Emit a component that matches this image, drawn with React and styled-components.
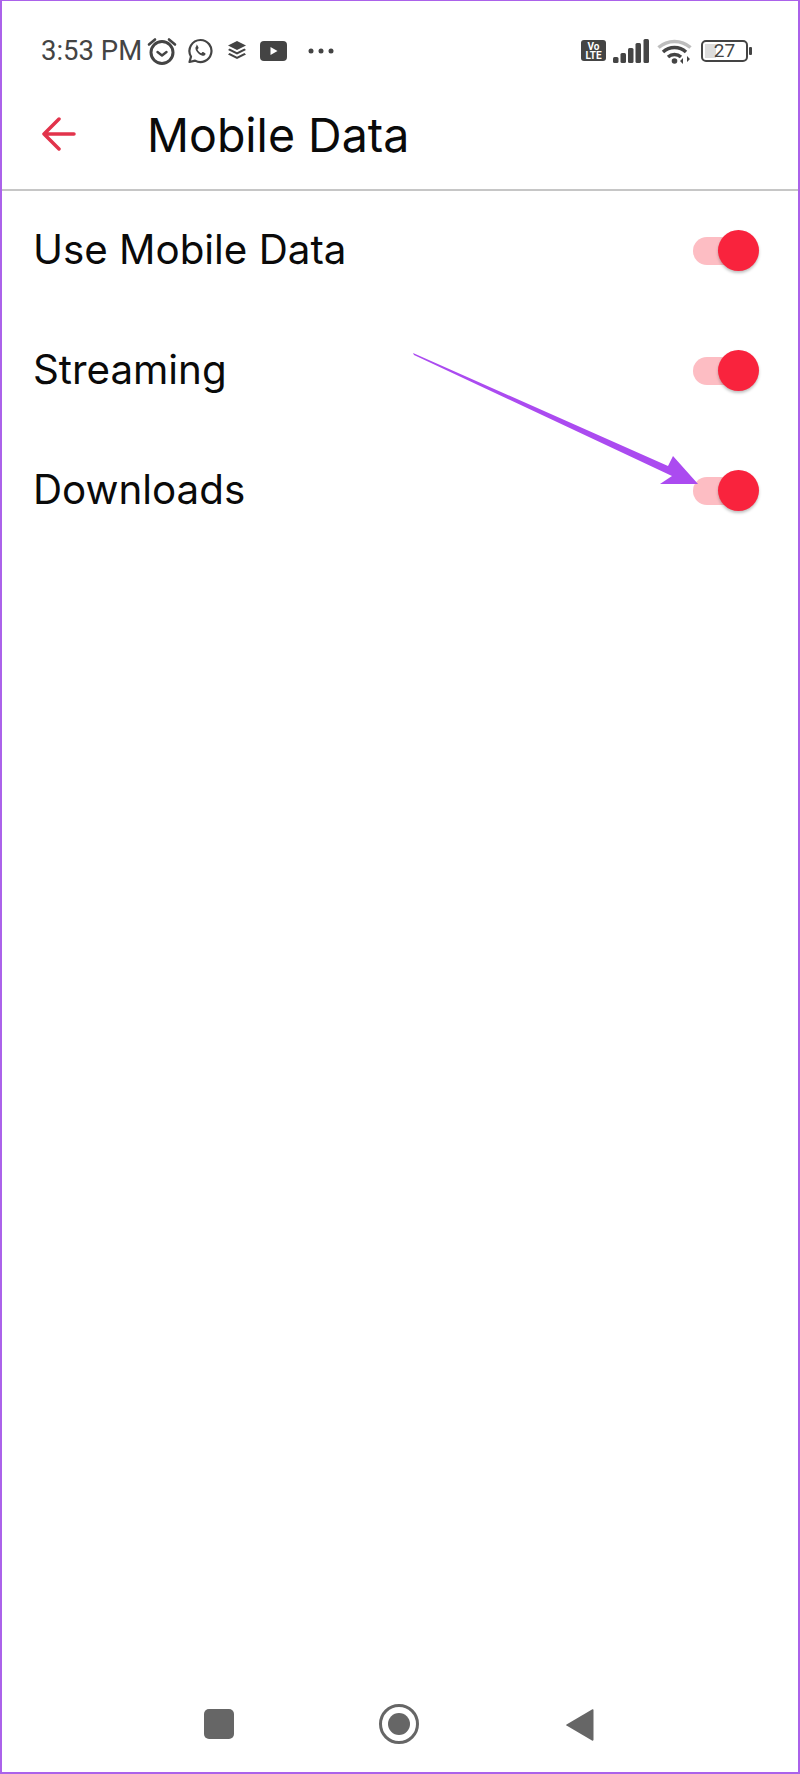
import styled, { createGlobalStyle } from 'styled-components';

const GlobalStyle = createGlobalStyle`
  html, body {
    margin: 0;
    padding: 0;
    background: #fff;
  }
  * {
    box-sizing: border-box;
  }
`;

const Page = styled.div`
  position: relative;
  width: 800px;
  height: 1774px;
  display: flex;
  flex-direction: column;
  background: #fff;
  border: 2px solid #ab62ea;
  border-top-width: 1px;
  font-family: 'Inter', 'Roboto', sans-serif;
  color: #0a0a0a;
  overflow: hidden;
`;

const StatusBar = styled.div`
  height: 99px;
  flex-shrink: 0;
  display: flex;
  align-items: center;
  padding: 0 50px 0 39px;
`;

const Time = styled.span`
  font-family: 'Roboto', sans-serif;
  font-size: 27.5px;
  color: #444;
  margin-right: 5px;
  white-space: nowrap;
`;

const StatusIcons = styled.div`
  display: flex;
  align-items: center;
  gap: ${({ $gap }) => $gap || 11}px;
`;

const RightIcons = styled(StatusIcons)`
  margin-left: auto;
`;

const IconSlot = styled.div`
  display: flex;
  margin-left: ${({ $left }) => $left || 0}px;
`;

const VoBadge = styled.div`
  width: 25px;
  height: 21px;
  margin-right: -1px;
  background: #444;
  border-radius: 3px;
  color: #fff;
  font-family: 'Roboto', sans-serif;
  font-size: 10px;
  line-height: 9px;
  font-weight: 700;
  text-align: center;
  padding-top: 2px;
`;

const Battery = styled.div`
  position: relative;
  width: 47px;
  height: 22px;
  border: 2px solid #444;
  border-radius: 5px;
  display: flex;
  align-items: center;
  justify-content: center;
  font-family: 'Roboto', sans-serif;
  font-size: 19px;
  color: #444;
  &::before {
    content: '';
    position: absolute;
    left: 2px;
    top: 2px;
    bottom: 2px;
    width: 11px;
    background: #dcdcdc;
  }
  &::after {
    content: '';
    position: absolute;
    right: -6px;
    top: 5px;
    width: 3px;
    height: 8px;
    background: #444;
    border-radius: 1px;
  }
`;

const BatteryValue = styled.span`
  position: relative;
`;

const Header = styled.header`
  flex-shrink: 0;
  height: 91px;
  padding: 0 0 20px 145px;
  position: relative;
  display: flex;
  align-items: center;
  border-bottom: 2px solid #c6c6c6;
`;

const BackButton = styled.div`
  position: absolute;
  left: 40px;
  top: 17px;
  display: flex;
`;

const Title = styled.h1`
  margin: 0;
  font-size: 46.5px;
  font-weight: 400;
  letter-spacing: 0;
`;

const Rows = styled.div`
  display: flex;
  flex-direction: column;
`;

const Row = styled.div`
  height: 120px;
  display: flex;
  align-items: center;
  justify-content: space-between;
  padding: 0 43px 0 31px;
`;

const RowLabel = styled.span`
  font-size: 40.3px;
  margin-bottom: 3px;
`;

const Toggle = styled.div`
  position: relative;
  width: 62px;
  height: 28px;
  border-radius: 14px;
  background: #fdbdc3;
`;

const Thumb = styled.div`
  position: absolute;
  right: -4px;
  top: -7px;
  width: 41px;
  height: 41px;
  border-radius: 50%;
  background: #f9233d;
  box-shadow: 0 2px 3px rgba(0, 0, 0, 0.25);
`;

const NavBar = styled.nav`
  margin-top: auto;
  height: 94px;
  flex-shrink: 0;
  display: flex;
  align-items: flex-start;
  padding: 29px 0 0 202px;
`;

const RecentButton = styled.div`
  width: 30px;
  height: 30px;
  margin-top: 2px;
  background: #666;
  border-radius: 5px;
`;

const HomeButton = styled.div`
  width: 40px;
  height: 40px;
  margin: -3px 0 0 145px;
  border: 3px solid #666;
  border-radius: 50%;
  display: flex;
  align-items: center;
  justify-content: center;
  &::after {
    content: '';
    width: 22px;
    height: 22px;
    border-radius: 50%;
    background: #666;
  }
`;

const BackNav = styled.div`
  margin: 1px 0 0 146px;
  display: flex;
`;

const Annotation = styled.svg`
  position: absolute;
  left: -2px;
  top: -1px;
  pointer-events: none;
`;

const AlarmIcon = () => (
  <svg width="30" height="28" viewBox="0 0 30 28" fill="none" stroke="#444">
    <circle cx="15" cy="15.5" r="11" strokeWidth="3" />
    <path d="M10.5 15l4.5 3.5 4.5-3.5" strokeWidth="2.4" strokeLinecap="round" strokeLinejoin="round" />
    <path d="M2 7.5L8 2.5M28 7.5L22 2.5" strokeWidth="2.6" strokeLinecap="round" />
  </svg>
);

const WhatsAppIcon = () => (
  <svg width="26" height="26" viewBox="0 0 26 26" fill="none">
    <path
      d="M13.5 2a11 11 0 0 0-9.5 16.6L2.5 24l5.6-1.4A11 11 0 1 0 13.5 2z"
      stroke="#444"
      strokeWidth="2.2"
      strokeLinejoin="round"
    />
    <path
      d="M9.8 7.8c-.8.5-1.6 1.6-1.3 3 .6 3 3.8 6.2 6.9 7 1.4.3 2.5-.4 3-1.3.3-.6.2-1-.2-1.3l-2-1.1c-.4-.2-.7-.1-1 .2l-.8.9c-1.700-.6-3.200-2.100-3.900-3.800l.8-.8c.3-.3.3-.6.200-1l-1-2.200c-.2-.5-.8-.8-1.700-.6z"
      fill="#444"
    />
  </svg>
);

const LayersIcon = () => (
  <svg width="20" height="19" viewBox="0 0 20 19" fill="#444">
    <path d="M10 0l9 4.500-9 4.500-9-4.500z" />
    <path d="M2.600 7.600L10 11.300l7.400-3.700 1.600 1.400-9 4.500-9-4.500z" />
    <path d="M2.600 12.100L10 15.800l7.400-3.700 1.600 1.400-9 4.500-9-4.500z" />
  </svg>
);

const YoutubeIcon = () => (
  <svg width="27" height="20" viewBox="0 0 27 20">
    <rect width="27" height="20" rx="4" fill="#444" />
    <path d="M10.500 6l7 4-7 4z" fill="#fff" />
  </svg>
);

const DotsIcon = () => (
  <svg width="26" height="6" viewBox="0 0 26 6" fill="#444">
    <circle cx="3" cy="3" r="2.500" />
    <circle cx="13" cy="3" r="2.500" />
    <circle cx="23" cy="3" r="2.500" />
  </svg>
);

const SignalIcon = () => (
  <svg width="36" height="24" viewBox="0 0 36 24" fill="#444">
    <rect x="0" y="18" width="5.500" height="6" rx="1.500" />
    <rect x="7.500" y="14" width="5.500" height="10" rx="1.500" />
    <rect x="15" y="9" width="5.500" height="15" rx="1.500" />
    <rect x="22.500" y="4" width="5.500" height="20" rx="1.500" />
    <rect x="30.500" y="0" width="5.500" height="24" rx="1.500" />
  </svg>
);

const WifiIcon = () => (
  <svg width="36" height="26" viewBox="0 0 36 26" fill="none">
    <path d="M1.500 9.500a24 24 0 0 1 32 0" stroke="#bdbdbd" strokeWidth="3.500" />
    <path d="M6 14a17 17 0 0 1 23 0" stroke="#444" strokeWidth="3.500" />
    <path d="M11 19a10 10 0 0 1 13 0" stroke="#444" strokeWidth="3.500" />
    <circle cx="17.500" cy="23" r="2.800" fill="#444" />
    <path d="M26 26v-6l-3 3zM30 18v6l3-3z" fill="#444" />
  </svg>
);

const BackArrow = () => (
  <svg width="34" height="34" viewBox="0 0 34 34" fill="none" stroke="#e2334b" strokeWidth="3.500" strokeLinecap="round" strokeLinejoin="round">
    <path d="M32 17H2M17 2L2 17l15 15" />
  </svg>
);

const ToggleSwitch = () => (
  <Toggle>
    <Thumb />
  </Toggle>
);

const rows = ['Use Mobile Data', 'Streaming', 'Downloads'];

const App = () => {
  return (
    <Page>
      <GlobalStyle />
      <StatusBar>
        <Time>3:53 PM</Time>
        <StatusIcons>
          <IconSlot>
            <AlarmIcon />
          </IconSlot>
          <IconSlot $left={-1}>
            <WhatsAppIcon />
          </IconSlot>
          <IconSlot $left={3}>
            <LayersIcon />
          </IconSlot>
          <IconSlot $left={2}>
            <YoutubeIcon />
          </IconSlot>
          <IconSlot $left={10}>
            <DotsIcon />
          </IconSlot>
        </StatusIcons>
        <RightIcons $gap={8}>
          <VoBadge>
            Vo
            <br />
            LTE
          </VoBadge>
          <SignalIcon />
          <WifiIcon />
          <Battery>
            <BatteryValue>27</BatteryValue>
          </Battery>
        </RightIcons>
      </StatusBar>
      <Header>
        <BackButton>
          <BackArrow />
        </BackButton>
        <Title>Mobile Data</Title>
      </Header>
      <Rows>
        {rows.map((label) => (
          <Row key={label}>
            <RowLabel>{label}</RowLabel>
            <ToggleSwitch />
          </Row>
        ))}
      </Rows>
      <NavBar>
        <RecentButton />
        <HomeButton />
        <BackNav>
          <svg width="29" height="34" viewBox="0 0 29 34">
            <path d="M27 1.500L1.500 16.500a.6.6 0 0 0 0 1L27 32.500c1 .5 1.500 0 1.500-1V2.500c0-1-.5-1.500-1.500-1z" fill="#666" />
          </svg>
        </BackNav>
      </NavBar>
      <Annotation width="800" height="1774" viewBox="0 0 800 1774">
        <path d="M413 353L414 355 672 476 660 484 698 484 673 456 668 466z" fill="#ab4bf0" />
      </Annotation>
    </Page>
  );
};

export default App;
